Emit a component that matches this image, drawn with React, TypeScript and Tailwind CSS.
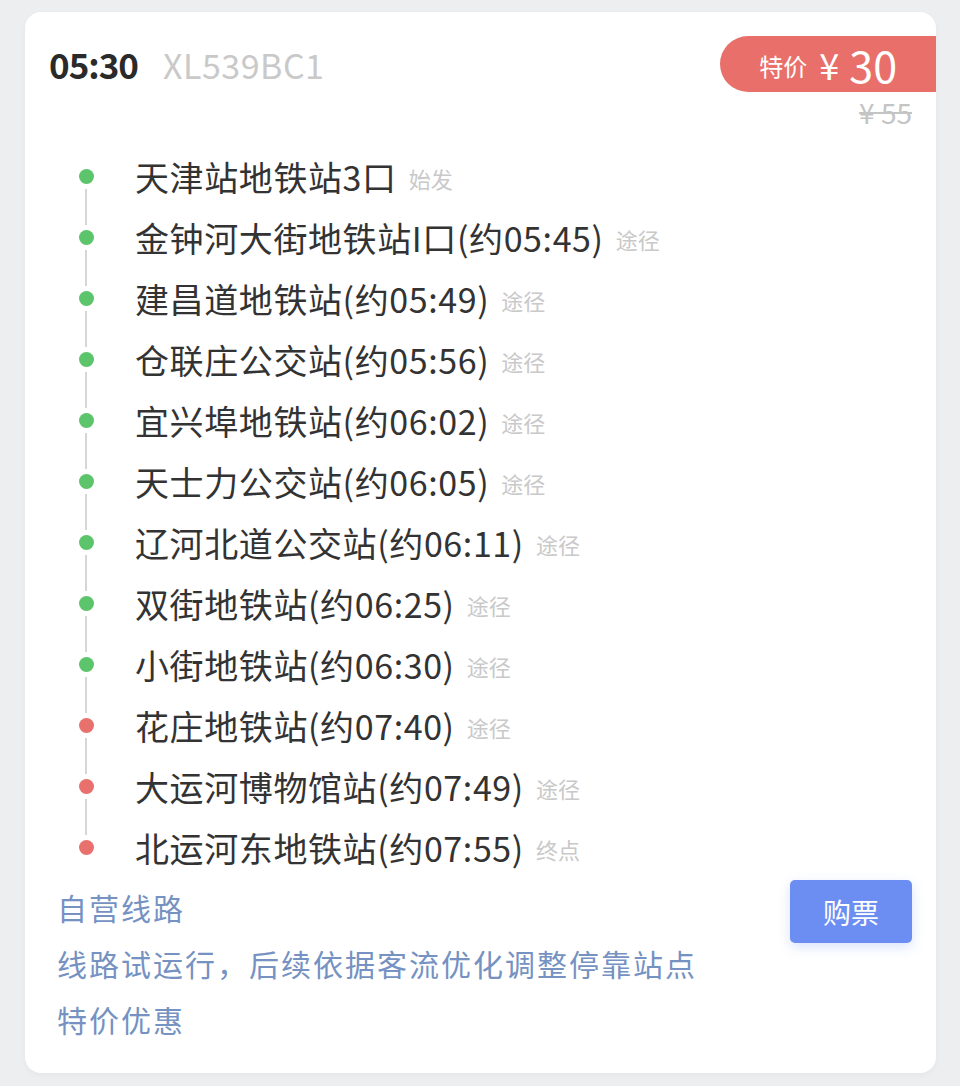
import React from 'react';

interface Stop {
  name: string;
  tag: string;
  color: 'green' | 'red';
}

const stops: Stop[] = [
  { name: '天津站地铁站3口', tag: '始发', color: 'green' },
  { name: '金钟河大街地铁站I口(约05:45)', tag: '途径', color: 'green' },
  { name: '建昌道地铁站(约05:49)', tag: '途径', color: 'green' },
  { name: '仓联庄公交站(约05:56)', tag: '途径', color: 'green' },
  { name: '宜兴埠地铁站(约06:02)', tag: '途径', color: 'green' },
  { name: '天士力公交站(约06:05)', tag: '途径', color: 'green' },
  { name: '辽河北道公交站(约06:11)', tag: '途径', color: 'green' },
  { name: '双街地铁站(约06:25)', tag: '途径', color: 'green' },
  { name: '小街地铁站(约06:30)', tag: '途径', color: 'green' },
  { name: '花庄地铁站(约07:40)', tag: '途径', color: 'red' },
  { name: '大运河博物馆站(约07:49)', tag: '途径', color: 'red' },
  { name: '北运河东地铁站(约07:55)', tag: '终点', color: 'red' },
];

const font = { fontFamily: '"Noto Sans CJK SC", "Noto Sans", sans-serif' };

const App: React.FC = () => {
  return (
    <div className="min-h-[1086px] bg-[#eceef0] pt-[12px] pl-[25px] pr-[24px] pb-[13px]" style={font}>
      <div className="bg-white rounded-[16px] shadow-[0_2px_6px_rgba(0,0,0,0.04)] h-[1061px] overflow-hidden">
        {/* header */}
        <div className="flex justify-between pt-[24px]">
          <div className="flex items-center h-[56px] pl-[24px] gap-[25px]">
            <span className="text-[35px] font-bold text-[#2a2a2a] tracking-[-1px]">05:30</span>
            <span className="text-[34px] text-[#c9c9c9] tracking-[0.5px]">XL539BC1</span>
          </div>
          <div className="flex flex-col items-end">
            <div className="h-[56px] bg-[#e9706a] rounded-l-full flex items-center pl-[39px] pr-[39px] text-white">
              <span className="text-[24px] mr-[12px] mt-[4px]">特价</span>
              <span className="text-[36px] mr-[10px]">¥</span>
              <span className="text-[43px]">30</span>
            </div>
            <div className="mr-[24px] h-[40px] leading-[40px] text-[28px] text-[#c4c4c4] line-through">¥ 55</div>
          </div>
        </div>

        {/* stops */}
        <div className="mt-[14px] pl-[47px]">
          {stops.map((s, i) => (
            <div key={i} className="flex h-[61px]">
              <div className="w-[28px] flex flex-col items-center">
                <div className={`flex-1 w-[2px] mb-[5px] ${i === 0 ? 'bg-transparent' : 'bg-[#d6d6d6]'}`} />
                <div className={`w-[15px] h-[15px] rounded-full ${s.color === 'green' ? 'bg-[#5cc46b]' : 'bg-[#e8716d]'}`} />
                <div className={`flex-1 w-[2px] mt-[5px] ${i === stops.length - 1 ? 'bg-transparent' : 'bg-[#d6d6d6]'}`} />
              </div>
              <div className="flex items-center ml-[35px]">
                <span className="text-[34px] text-[#333333] tracking-[0.6px]">{s.name}</span>
                <span className="text-[22px] text-[#c9c9c9] ml-[12px] mt-[4px]">{s.tag}</span>
              </div>
            </div>
          ))}
        </div>

        {/* footer */}
        <div className="flex justify-between pl-[32px] pr-[24px] mt-[1px]">
          <div className="flex flex-col text-[30px] text-[#7592c2] leading-[56px] tracking-[2px]">
            <span>自营线路</span>
            <span>线路试运行，后续依据客流优化调整停靠站点</span>
            <span>特价优惠</span>
          </div>
          <button className="w-[122px] h-[63px] mt-[1px] bg-[#6c8ef2] rounded-[5px] text-white text-[28px] shadow-[0_4px_12px_rgba(108,142,242,0.25)]">
            购票
          </button>
        </div>
      </div>
    </div>
  );
};

export default App;
